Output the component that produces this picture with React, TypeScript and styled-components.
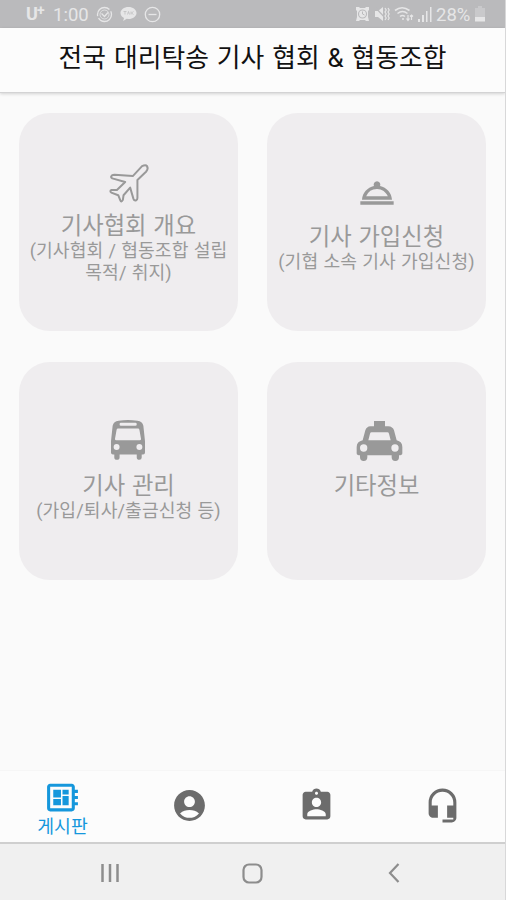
import React from "react";
import styled, { createGlobalStyle } from "styled-components";
import {
  MdAccountCircle,
  MdAssignmentInd,
  MdDeveloperBoard,
  MdHeadsetMic,
  MdOutlineRoomService,
} from "react-icons/md";

const GlobalStyle = createGlobalStyle`
  * { box-sizing: border-box; }
  body {
    margin: 0;
    background: #fafafa;
    font-family: Roboto, "Noto Sans CJK KR", sans-serif;
  }
`;

const Screen = styled.div`
  width: 506px;
  height: 900px;
  display: flex;
  flex-direction: column;
  background: #fafafa;
  border-right: 1px solid #d8d8d9;
  overflow: hidden;
`;

const StatusBar = styled.div`
  flex: none;
  height: 28px;
  padding: 0 20px 0 26px;
  display: flex;
  justify-content: space-between;
  align-items: center;
  background: #bababc;
  color: #e6e6e7;
`;

const StatusGroup = styled.div<{ $gap: number }>`
  display: flex;
  align-items: center;
  gap: ${(p) => p.$gap}px;
  svg { display: block; }
`;

const Carrier = styled.span`
  width: 20px;
  display: flex;
  font-size: 18px;
  line-height: 20px;
  font-weight: 700;
  sup { font-size: 14px; line-height: 12px; margin-left: -1px; }
`;

const StatusText = styled.span<{ $width: number }>`
  width: ${(p) => p.$width}px;
  font-size: 18.5px;
  line-height: 20px;
  white-space: nowrap;
  padding-top: 2px;
`;

const Header = styled.header`
  flex: none;
  height: 65px;
  display: flex;
  justify-content: center;
  background: #fcfcfc;
  border-bottom: 1px solid #d3d3d4;
  box-shadow: 0 1px 3px rgba(0, 0, 0, 0.16);
`;

const Title = styled.h1`
  margin: 0;
  padding-top: 10px;
  font-size: 25.8px;
  line-height: 40px;
  font-weight: 400;
  word-spacing: 1.5px;
  color: #111;
  white-space: nowrap;
`;

const Grid = styled.main`
  flex: 1;
  padding: 20px 18px 0 19px;
  display: grid;
  grid-template-columns: 219px 219px;
  grid-auto-rows: 218px;
  column-gap: 29px;
  row-gap: 31px;
  align-content: start;
`;

const Card = styled.section`
  border-radius: 31px;
  background: #efedef;
  color: #999;
  display: flex;
  flex-direction: column;
  align-items: center;
  justify-content: center;
`;

const IconSlot = styled.div<{ $lift: number; $shift?: number }>`
  height: 51px;
  padding-bottom: ${(p) => p.$lift}px;
  margin-left: ${(p) => p.$shift ?? 0}px;
  display: flex;
  align-items: center;
  justify-content: center;
  svg { display: block; flex: none; }
`;

const CardTitle = styled.h2`
  margin: 0;
  font-size: 23.3px;
  line-height: 28px;
  font-weight: 400;
  word-spacing: 1px;
  white-space: nowrap;
`;

const CardNote = styled.p`
  margin: 0;
  min-height: 22px;
  font-size: 18.2px;
  line-height: 22px;
  letter-spacing: 0.1px;
  word-spacing: 0.5px;
  text-align: center;
  white-space: nowrap;
`;

const TabBar = styled.nav`
  flex: none;
  height: 72px;
  display: grid;
  grid-template-columns: 125px 128px 126px 127px;
  background: #fcfcfc;
  border-top: 1px solid #f6f6f6;
`;

const Tab = styled.div<{ $active?: boolean }>`
  display: flex;
  flex-direction: column;
  align-items: center;
  justify-content: center;
  padding-top: ${(p) => (p.$active ? 3 : 0)}px;
  padding-bottom: ${(p) => (p.$active ? 0 : 2)}px;
  color: ${(p) => (p.$active ? "#1597dc" : "#6c6c6c")};
  svg { display: block; flex: none; }
`;

const TabLabel = styled.span`
  font-size: 18.3px;
  line-height: 22px;
`;

const SystemBar = styled.div`
  flex: none;
  height: 58px;
  padding: 2px 0 0;
  display: grid;
  grid-template-columns: 181px 142px 142px;
  background: #f0f0f0;
  border-top: 2px solid #cfcfcf;
`;

const SystemKey = styled.div<{ $shift?: number }>`
  display: flex;
  align-items: center;
  justify-content: center;
  padding-left: ${(p) => p.$shift ?? 0}px;
`;

const CheckRing = () => (
  <svg width="17" height="17" viewBox="0 0 17 17" fill="none" stroke="currentColor" strokeWidth="1.3">
    <circle cx="8.5" cy="8.5" r="7" strokeDasharray="18 2.2" />
    <circle cx="8.5" cy="8.5" r="4.5" strokeWidth=".8" />
    <path d="M5.5 7.5l3 3 3.5-4" />
  </svg>
);

const TalkBubble = () => (
  <svg width="17" height="16" viewBox="0 0 17 16">
    <path d="M8.5 1C4 1 .5 3.7.5 7c0 2.1 1.4 4 3.5 5l-.8 3 3.5-2.3 1.8.2c4.5 0 8-2.7 8-6s-3.5-6-8-6z" fill="currentColor" />
    <path d="M3.5 5.5h3M5 5.5v3M7.5 8.5l1-3 1 3M11 5.5v3M13.5 5.5l-2 1.5 2 1.5" stroke="#bababc" strokeWidth=".7" fill="none" />
  </svg>
);

const MinusRing = () => (
  <svg width="17" height="17" viewBox="0 0 17 17" fill="none" stroke="currentColor" strokeWidth="1.3">
    <circle cx="8.5" cy="8.5" r="7.2" />
    <path d="M4.5 8.5h8" />
  </svg>
);

const Alarm = () => (
  <svg width="15" height="16" viewBox="0 0 15 16">
    <path d="M1 1h3l1 1h5l1-1h3v3l-1 1v6l1 4h-3l-1-1H5l-1 1H1l1-4V5L1 4z" fill="currentColor" />
    <circle cx="7.5" cy="8" r="4" fill="none" stroke="#bababc" strokeWidth="1.1" />
    <path d="M7.5 5.5V8l2 1" fill="none" stroke="#bababc" />
  </svg>
);

const Muted = () => (
  <svg width="16" height="16" viewBox="0 0 16 16">
    <path d="M1 5h3l5-4v14l-5-4H1z" fill="currentColor" />
    <path d="M1 1l12 13" stroke="#bababc" strokeWidth="1.2" />
    <path d="M11 2l1.200 2-1.200 2 1.200 2-1.200 2 1.200 2-1.200 2M14 2l1.200 2-1.200 2 1.200 2-1.200 2 1.200 2-1.200 2" fill="none" stroke="currentColor" strokeWidth="1.2" />
  </svg>
);

const Wifi = () => (
  <svg width="20" height="16" viewBox="0 0 20 16" fill="none" stroke="currentColor" strokeWidth="1.6">
    <path d="M1 4.5Q8 -1 15.5 4.5M3.5 7.5Q8.5 3.5 13.5 7.5M6 10.5Q8.5 8.5 11 10.5" />
    <circle cx="9" cy="13" r="1" fill="currentColor" stroke="none" />
    <path d="M14 9v5M12.5 12.5L14 14.5l1.5-2M17.5 14V9M16 10.5L17.5 9l1.5 1.5" strokeWidth="1.2" />
  </svg>
);

const Signal = () => (
  <svg width="14" height="15" viewBox="0 0 14 15" fill="currentColor">
    <path d="M0 12h2v3H0zM4 8h2v7H4zM8 4h1.5v11H8zM12 0h1.5v15H12z" />
  </svg>
);

const Battery = () => (
  <svg width="10" height="16" viewBox="0 0 10 16" fill="currentColor">
    <path d="M3 0h4v2h3v9H0V2h3z" opacity=".35" />
    <path d="M0 11h10v4.5H0z" />
  </svg>
);

const Plane = () => (
  <svg width="43" height="42" viewBox="290 63 130 126" fill="none" stroke="currentColor" strokeWidth="6" strokeLinejoin="round">
    <path d="M396 75Q407 69 411 75Q416 83 408 92L382 117V171Q382 177 377 179Q372 180 370 174L360 140L340 163L338 177Q333 186 330 178L324 163L303 155Q297 150 304 147H320L345 123L306 112Q299 108 305 103Q308 101 313 101L368 105Z" />
  </svg>
);

const Bus = () => (
  <svg width="36" height="42" viewBox="299 55 109 126">
    <path
      fill="currentColor"
      fillRule="evenodd"
      d="M325 60Q353 55 382 60Q397 62 400 75L405 122V156Q405 162 399 162H395V171Q395 178 388 178Q380 178 380 171V162H328V171Q328 178 320 178Q312 178 312 171V162H308Q302 162 302 156V122L307 75Q310 62 325 60ZM332 66Q328 66 328 70Q328 75 332 75H376Q380 75 380 70Q380 66 376 66ZM323 83Q320 83 319 87L314 115Q314 119 318 119H389Q393 119 393 115L388 87Q387 83 384 83ZM319 130A9 9 0 1 0 319 148A9 9 0 1 0 319 130M388 130A9 9 0 1 0 388 148A9 9 0 1 0 388 130"
    />
  </svg>
);

const Taxi = () => (
  <svg width="47" height="42" viewBox="289 61 141 126">
    <path
      fill="currentColor"
      fillRule="evenodd"
      d="M343 64H376V80H386Q399 81 403 92L411 122Q428 126 428 142V161Q428 167 418 167V173Q418 184 407 184Q396 184 396 173V167H323V173Q323 184 312 184Q301 184 301 173V167Q291 167 291 161V142Q291 126 309 122L317 92Q321 81 332 80H343ZM336 98Q332 98 331 102L326 122H393L388 102Q387 98 383 98ZM312 134A11 11 0 1 0 312 156A11 11 0 1 0 312 134M406 134A11 11 0 1 0 406 156A11 11 0 1 0 406 134"
    />
  </svg>
);

const cards = [
  { title: "기사협회 개요", notes: ["(기사협회 / 협동조합 설립", "목적/ 취지)"], icon: <Plane />, lift: 6, shift: -1 },
  { title: "기사 가입신청", notes: ["(기협 소속 기사 가입신청)"], icon: <MdOutlineRoomService size={40} />, lift: 9, shift: 0 },
  { title: "기사 관리", notes: ["(가입/퇴사/출금신청 등)"], icon: <Bus />, lift: 13, shift: -2 },
  { title: "기타정보", notes: [""], icon: <Taxi />, lift: 11, shift: 6 },
];

export default function App() {
  return (
    <>
      <GlobalStyle />
      <Screen>
        <StatusBar>
          <StatusGroup $gap={7}>
            <Carrier>U<sup>+</sup></Carrier>
            <StatusText $width={36}>1:00</StatusText>
            <CheckRing />
            <TalkBubble />
            <MinusRing />
          </StatusGroup>
          <StatusGroup $gap={4}>
            <Alarm />
            <Muted />
            <Wifi />
            <Signal />
            <StatusText $width={35}>28%</StatusText>
            <Battery />
          </StatusGroup>
        </StatusBar>
        <Header>
          <Title>전국 대리탁송 기사 협회 &amp; 협동조합</Title>
        </Header>
        <Grid>
          {cards.map((card) => (
            <Card key={card.title}>
              <IconSlot $lift={card.lift} $shift={card.shift}>{card.icon}</IconSlot>
              <CardTitle>{card.title}</CardTitle>
              {card.notes.map((line) => (
                <CardNote key={line}>{line}</CardNote>
              ))}
            </Card>
          ))}
        </Grid>
        <TabBar>
          <Tab $active>
            <MdDeveloperBoard size={37} />
            <TabLabel>게시판</TabLabel>
          </Tab>
          <Tab><MdAccountCircle size={37} /></Tab>
          <Tab><MdAssignmentInd size={37} /></Tab>
          <Tab><MdHeadsetMic size={37} /></Tab>
        </TabBar>
        <SystemBar>
          <SystemKey $shift={39}>
            <svg width="20" height="20" viewBox="0 0 20 20" stroke="#8d8d8d" strokeWidth="2.5">
              <path d="M2.5 1v18M10 1v18M17.5 1v18" />
            </svg>
          </SystemKey>
          <SystemKey>
            <svg width="21" height="21" viewBox="0 0 21 21" fill="none" stroke="#8d8d8d" strokeWidth="2.2">
              <rect x="1.5" y="1.5" width="18" height="18" rx="5.5" />
            </svg>
          </SystemKey>
          <SystemKey>
            <svg width="12" height="20" viewBox="0 0 12 20" fill="none" stroke="#8d8d8d" strokeWidth="2.2">
              <path d="M10.5 1L2 10l8.5 9" />
            </svg>
          </SystemKey>
        </SystemBar>
      </Screen>
    </>
  );
}
